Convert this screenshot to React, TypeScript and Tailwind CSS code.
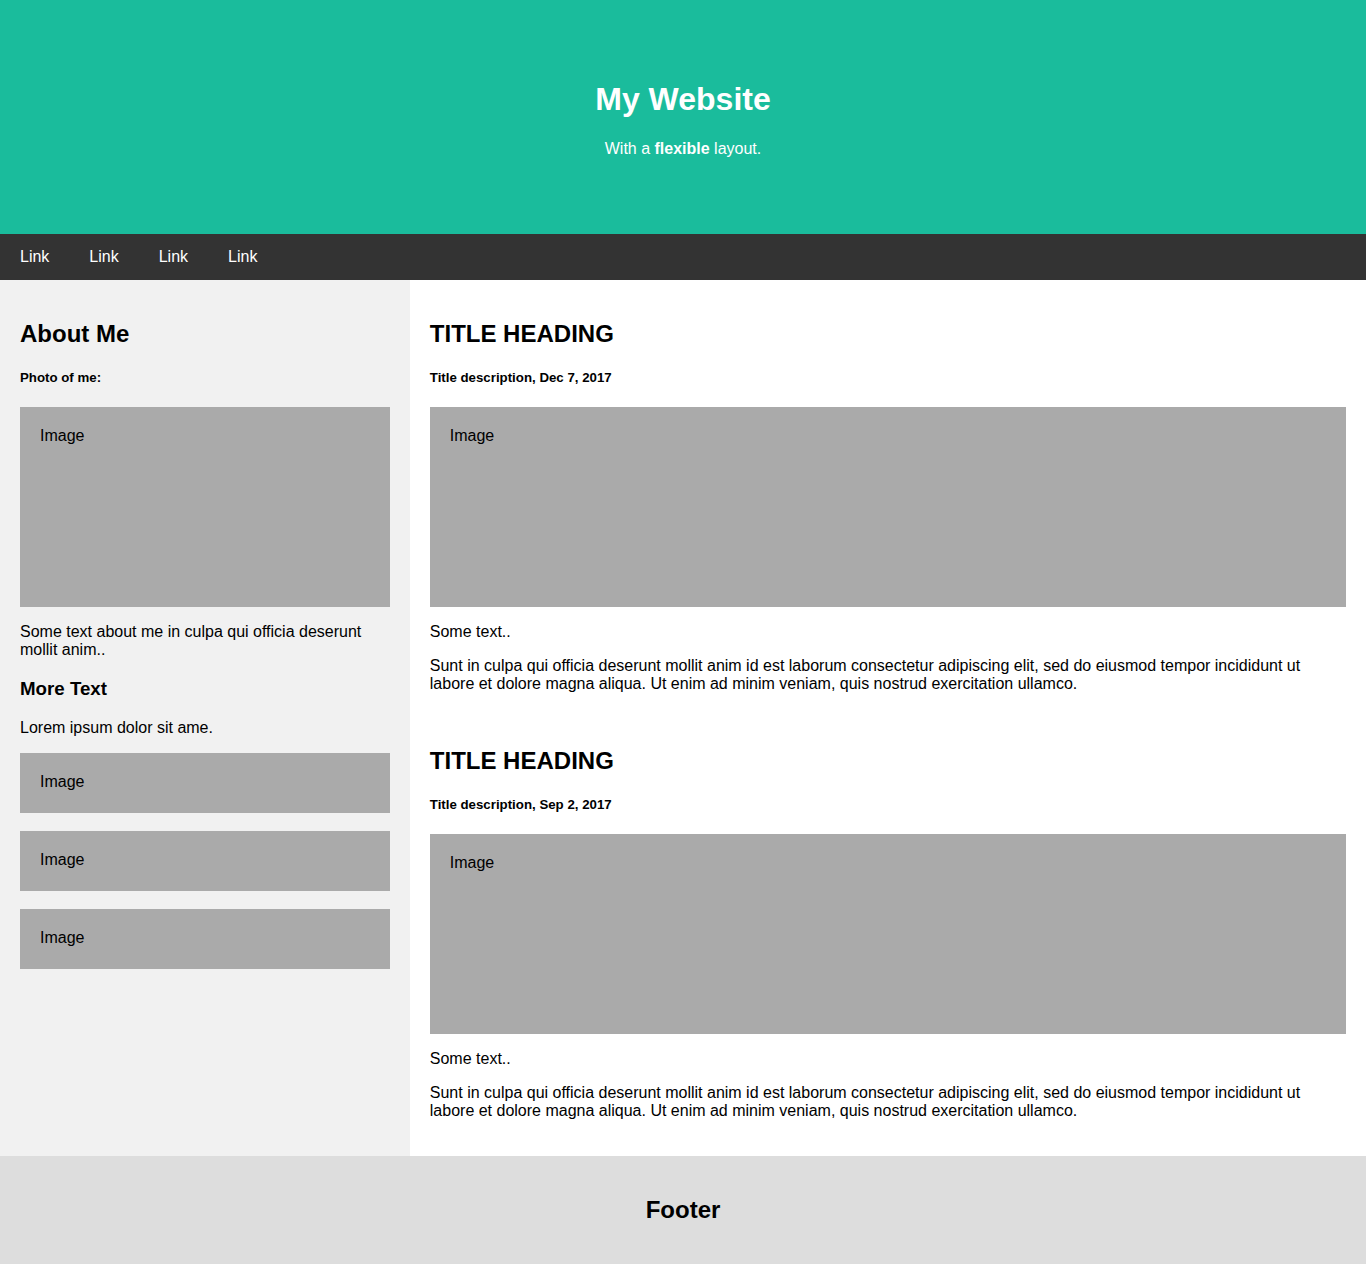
import React from 'react';

const FakeImg = ({ tall = true, extra = '' }: { tall?: boolean; extra?: string }) => (
  <div className={`w-full bg-[#aaa] p-5 ${tall ? 'h-[200px]' : 'h-[60px]'} ${extra}`}>Image</div>
);

const Article = ({ date, first }: { date: string; first?: boolean }) => (
  <div className={first ? '' : 'pt-[18px]'}>
    <h2 className="my-[19.92px] text-[24px] font-bold leading-[28px]">TITLE HEADING</h2>
    <h5 className="my-[22.18px] text-[13.28px] font-bold leading-[15px]">Title description, {date}</h5>
    <FakeImg />
    <p className="my-4">Some text..</p>
    <p className="my-4">
      Sunt in culpa qui officia deserunt mollit anim id est laborum consectetur adipiscing elit, sed do eiusmod tempor
      incididunt ut labore et dolore magna aliqua. Ut enim ad minim veniam, quis nostrud exercitation ullamco.
    </p>
  </div>
);

const App = () => {
  const links = ['Link', 'Link', 'Link', 'Link'];
  return (
    <div className="min-h-screen bg-white font-['Liberation_Sans',Arial,sans-serif] text-[16px] leading-[18px] text-black">
      <div className="bg-[#1abc9c] p-[60px] text-center text-white">
        <h1 className="my-[21.44px] text-[32px] font-bold leading-[37px]">My Website</h1>
        <p className="my-4">
          With a <b>flexible</b> layout.
        </p>
      </div>

      <div className="flex bg-[#333]">
        {links.map((l, i) => (
          <a key={i} href="#" className="px-5 py-[14px] text-white">
            {l}
          </a>
        ))}
      </div>

      <div className="flex">
        <div className="w-[30%] bg-[#f1f1f1] p-5">
          <h2 className="my-[19.92px] text-[24px] font-bold leading-[28px]">About Me</h2>
          <h5 className="my-[22.18px] text-[13.28px] font-bold leading-[15px]">Photo of me:</h5>
          <FakeImg />
          <p className="my-4">Some text about me in culpa qui officia deserunt mollit anim..</p>
          <h3 className="my-[18.72px] text-[18.72px] font-bold leading-[22px]">More Text</h3>
          <p className="my-4">Lorem ipsum dolor sit ame.</p>
          <FakeImg tall={false} />
          <FakeImg tall={false} extra="mt-[18px]" />
          <FakeImg tall={false} extra="mt-[18px]" />
        </div>

        <div className="w-[70%] bg-white p-5">
          <Article date="Dec 7, 2017" first />
          <Article date="Sep 2, 2017" />
        </div>
      </div>

      <div className="bg-[#ddd] p-5 text-center">
        <h2 className="my-[19.92px] text-[24px] font-bold leading-[28px]">Footer</h2>
      </div>
    </div>
  );
};

export default App;
